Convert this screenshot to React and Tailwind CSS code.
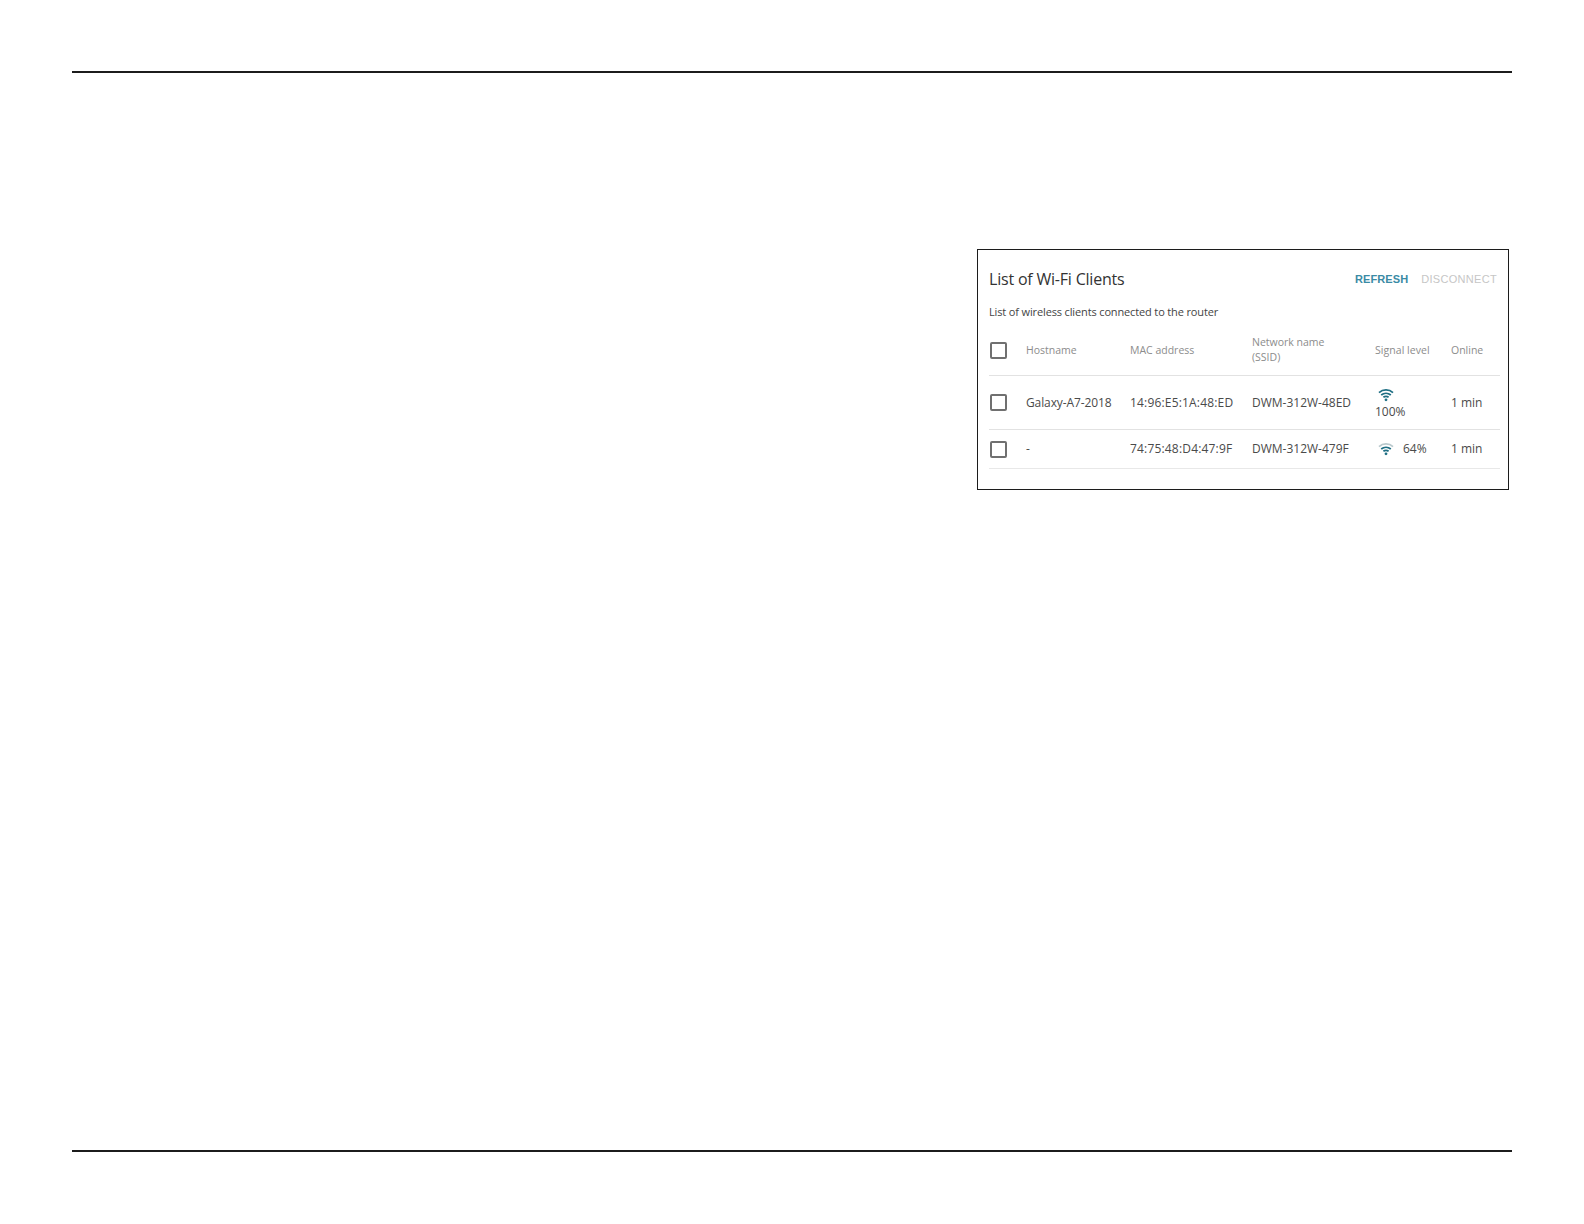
const sans = "font-['Open_Sans','Noto_Sans',sans-serif]";

function Wifi({ outer = "#1f6f84" }) {
  return (
    <svg width="16" height="14" viewBox="0 0 16 14" fill="none" className="shrink-0">
      <path d="M1 4.6C5 1 11 1 15 4.6" stroke={outer} strokeWidth="1.8" />
      <path d="M3.2 7C6 4.7 10 4.7 12.8 7" stroke="#1f6f84" strokeWidth="1.8" />
      <path d="M5.4 9.3C7 8.1 9 8.1 10.6 9.3" stroke="#1f6f84" strokeWidth="1.8" />
      <circle cx="8" cy="11.8" r="1.4" fill="#1f6f84" />
    </svg>
  );
}

function Box({ className = "" }) {
  return <div className={`w-[17px] h-[17px] rounded-[2px] border-2 border-[#707070] bg-white shrink-0 ${className}`} />;
}

function Row({ className = "", check, host, mac, ssid, signal, online }) {
  return (
    <div className={`flex items-center pl-[1px] ${className}`}>
      <div className="w-[36px] shrink-0">{check}</div>
      <div className="w-[104px] shrink-0">{host}</div>
      <div className="w-[122px] shrink-0">{mac}</div>
      <div className="w-[123px] shrink-0">{ssid}</div>
      <div className="w-[76px] shrink-0">{signal}</div>
      <div className="shrink-0">{online}</div>
    </div>
  );
}

export default function App() {
  return (
    <div className={`h-[1224px] bg-white flex flex-col px-[72px] pt-[71px] pb-[72px] ${sans}`}>
      <div className="h-[2px] bg-[#1c1c1c]" />
      <div className="flex justify-end pr-[3px] mt-[176px]">
        <div className="w-[532px] h-[241px] border border-[#1c1c1c] pl-[11px] pr-[8px] pt-[17px]">
          <div className="flex items-center justify-between h-[24px] pr-[3px]">
            <h1 className="text-[16px] leading-[24px] text-[#333] tracking-[-0.2px]">List of Wi-Fi Clients</h1>
            <div className="flex gap-[13px] font-['Liberation_Sans',sans-serif] text-[11px] leading-[14px]">
              <span className="font-bold text-[#3a8ba5] tracking-[0.1px]">REFRESH</span>
              <span className="text-[#c6c6c6] tracking-[0.3px]">DISCONNECT</span>
            </div>
          </div>
          <p className="mt-[13px] text-[11px] leading-[16px] text-[#444] tracking-[-0.14px]">List of wireless clients connected to the router</p>
          <Row
            className="h-[51px] mt-[5px] border-b border-[#e2e2e2] text-[10.5px] leading-[15px] text-[#8c8c8c]"
            check={<Box className="mt-[1px]" />}
            host="Hostname"
            mac="MAC address"
            ssid={<span>Network name<br />(SSID)</span>}
            signal={<span className="tracking-[0.05px]">Signal level</span>}
            online="Online"
          />
          <Row
            className="h-[54px] border-b border-[#e2e2e2] text-[12px] leading-[16px] text-[#4a4a4a]"
            check={<Box />}
            host={<span className="tracking-[-0.1px]">Galaxy-A7-2018</span>}
            mac={<span className="tracking-[0.18px]">14:96:E5:1A:48:ED</span>}
            ssid="DWM-312W-48ED"
            signal={<div className="flex flex-col gap-[2px] pt-[2px]"><div className="pl-[3px]"><Wifi /></div><span>100%</span></div>}
            online="1 min"
          />
          <Row
            className="h-[39px] border-b border-[#e8e8e8] text-[12px] leading-[16px] text-[#4a4a4a]"
            check={<Box />}
            host="-"
            mac={<span className="tracking-[0.18px]">74:75:48:D4:47:9F</span>}
            ssid="DWM-312W-479F"
            signal={<div className="flex items-center gap-[9px] pl-[3px]"><Wifi outer="#b9c9cd" /><span>64%</span></div>}
            online="1 min"
          />
        </div>
      </div>
      <div className="mt-auto h-[2px] bg-[#1c1c1c]" />
    </div>
  );
}
